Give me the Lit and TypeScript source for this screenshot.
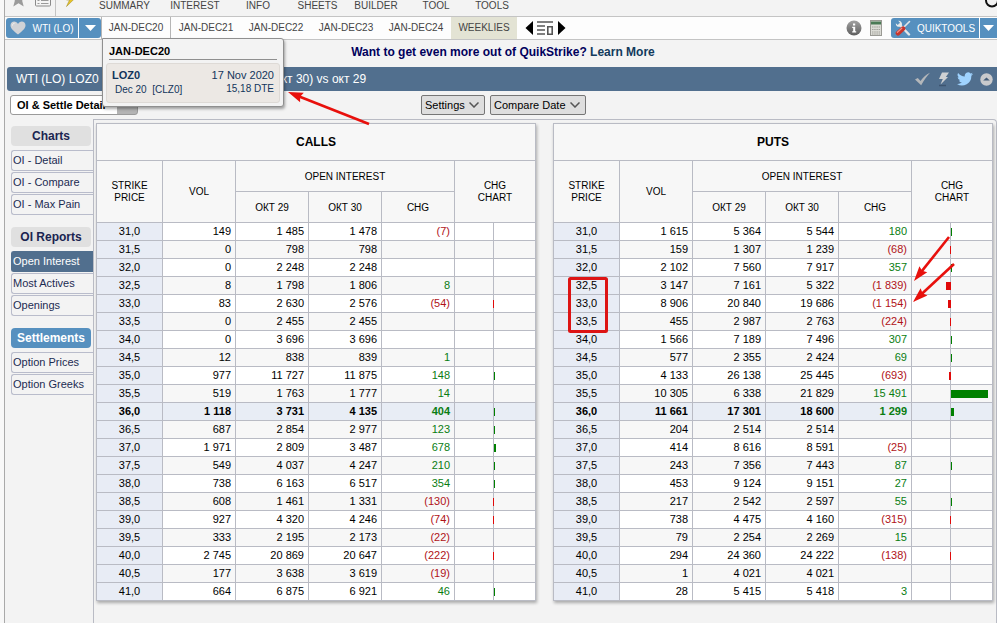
import { LitElement, html, css, svg, nothing } from "lit";
import { customElement, property } from "lit/decorators.js";
import { classMap } from "lit/directives/class-map.js";
import { styleMap } from "lit/directives/style-map.js";

type Row = [strike: string, vol: number, prev: number, last: number, chg: number];

const CALLS: Row[] = [
  ["31,0", 149, 1485, 1478, -7],
  ["31,5", 0, 798, 798, 0],
  ["32,0", 0, 2248, 2248, 0],
  ["32,5", 8, 1798, 1806, 8],
  ["33,0", 83, 2630, 2576, -54],
  ["33,5", 0, 2455, 2455, 0],
  ["34,0", 0, 3696, 3696, 0],
  ["34,5", 12, 838, 839, 1],
  ["35,0", 977, 11727, 11875, 148],
  ["35,5", 519, 1763, 1777, 14],
  ["36,0", 1118, 3731, 4135, 404],
  ["36,5", 687, 2854, 2977, 123],
  ["37,0", 1971, 2809, 3487, 678],
  ["37,5", 549, 4037, 4247, 210],
  ["38,0", 738, 6163, 6517, 354],
  ["38,5", 608, 1461, 1331, -130],
  ["39,0", 927, 4320, 4246, -74],
  ["39,5", 333, 2195, 2173, -22],
  ["40,0", 2745, 20869, 20647, -222],
  ["40,5", 177, 3638, 3619, -19],
  ["41,0", 664, 6875, 6921, 46],
];

const PUTS: Row[] = [
  ["31,0", 1615, 5364, 5544, 180],
  ["31,5", 159, 1307, 1239, -68],
  ["32,0", 2102, 7560, 7917, 357],
  ["32,5", 3147, 7161, 5322, -1839],
  ["33,0", 8906, 20840, 19686, -1154],
  ["33,5", 455, 2987, 2763, -224],
  ["34,0", 1566, 7189, 7496, 307],
  ["34,5", 577, 2355, 2424, 69],
  ["35,0", 4133, 26138, 25445, -693],
  ["35,5", 10305, 6338, 21829, 15491],
  ["36,0", 11661, 17301, 18600, 1299],
  ["36,5", 204, 2514, 2514, 0],
  ["37,0", 414, 8616, 8591, -25],
  ["37,5", 243, 7356, 7443, 87],
  ["38,0", 453, 9124, 9151, 27],
  ["38,5", 217, 2542, 2597, 55],
  ["39,0", 738, 4475, 4160, -315],
  ["39,5", 79, 2254, 2269, 15],
  ["40,0", 294, 24360, 24222, -138],
  ["40,5", 1, 4021, 4021, 0],
  ["41,0", 28, 5415, 5418, 3],
];

const AT_THE_MONEY = "36,0";
const CONTRACTS_PER_PIXEL = 420;
const SMALLEST_DRAWN = 40;

const grouped = (n: number) => String(n).replace(/\B(?=(\d{3})+$)/g, " ");
const signed = (n: number) => (n === 0 ? "" : n < 0 ? `(${grouped(-n)})` : grouped(n));

@customElement("oi-table")
export class OiTable extends LitElement {
  @property() caption = "";
  @property({ attribute: false }) rows: Row[] = [];

  static styles = css`
    :host {
      display: block;
      box-shadow: 1px 2px 3px rgba(0, 0, 0, 0.3);
    }
    table {
      width: 100%;
      table-layout: fixed;
      border-collapse: separate;
      border-spacing: 0;
      border: solid #b9bbc4;
      border-width: 1px 0 0 1px;
      background: #fff;
      color: #000;
      font-size: 11px;
      line-height: 13px;
      white-space: nowrap;
    }
    .strike { width: 66px; }
    .num { width: 73px; }
    .neg { width: 39px; }
    .pos { width: 42px; }
    th,
    td {
      box-sizing: border-box;
      padding: 0 4px;
      border: solid #b9bbc4;
      border-width: 0 1px 1px 0;
      font-weight: 400;
    }
    thead th {
      height: 31px;
      padding-top: 2px;
      background: #f7f7f7;
      font-size: 10px;
      line-height: 12px;
      white-space: normal;
    }
    thead .caption {
      height: 37px;
      padding-top: 0;
      font-size: 12px;
      font-weight: 700;
    }
    thead .tall { padding-top: 0; }
    tbody th {
      background: #e8ecf5;
      text-align: center;
    }
    td { height: 18px; text-align: right; }
    tbody tr:nth-child(even) td { background: #f7f7f7; }
    tbody .atm th,
    tbody .atm td { background: #e8edf5; font-weight: 700; }
    tbody .half { padding: 0; }
    .up { color: #0a7d12; }
    .down { color: #b01218; }
    .bar { position: relative; height: 8px; }
    .bar.rise { background: #008000; }
    .bar.fall { margin: 0 -1px 0 auto; background: #e00a0a; }
  `;

  private bar(chg: number) {
    if (Math.abs(chg) < SMALLEST_DRAWN) return nothing;
    const length = Math.abs(chg) / CONTRACTS_PER_PIXEL;
    const width = chg > 0 ? Math.max(1, Math.round(length)) : Math.floor(length) + 1;
    return html`<div
      class=${classMap({ bar: true, rise: chg > 0, fall: chg < 0 })}
      style=${styleMap({ width: `${width}px` })}
    ></div>`;
  }

  render() {
    return html`
      <table aria-label=${this.caption}>
        <colgroup>
          <col class="strike" /><col class="num" /><col class="num" /><col class="num" />
          <col class="num" /><col class="neg" /><col class="pos" />
        </colgroup>
        <thead>
          <tr><th class="caption" colspan="7">${this.caption}</th></tr>
          <tr>
            <th class="tall" rowspan="2">STRIKE<br />PRICE</th>
            <th class="tall" rowspan="2">VOL</th>
            <th colspan="3">OPEN INTEREST</th>
            <th class="tall" rowspan="2" colspan="2">CHG<br />CHART</th>
          </tr>
          <tr><th>ОКТ 29</th><th>ОКТ 30</th><th>CHG</th></tr>
        </thead>
        <tbody>
          ${this.rows.map(
            ([strike, vol, prev, last, chg]) => html`
              <tr class=${classMap({ atm: strike === AT_THE_MONEY })}>
                <th scope="row">${strike}</th>
                <td>${grouped(vol)}</td>
                <td>${grouped(prev)}</td>
                <td>${grouped(last)}</td>
                <td class=${chg < 0 ? "down" : "up"}>${signed(chg)}</td>
                <td class="half">${chg < 0 ? this.bar(chg) : nothing}</td>
                <td class="half">${chg > 0 ? this.bar(chg) : nothing}</td>
              </tr>
            `
          )}
        </tbody>
      </table>
    `;
  }
}

const MENU = ["SUMMARY", "INTEREST", "INFO", "SHEETS", "BUILDER", "TOOL", "TOOLS"];
const YEARS = ["JAN-DEC20", "JAN-DEC21", "JAN-DEC22", "JAN-DEC23", "JAN-DEC24"];
const SIDEBAR = [
  { title: "Charts", items: ["OI - Detail", "OI - Compare", "OI - Max Pain"] },
  { title: "OI Reports", items: ["Open Interest", "Most Actives", "Openings"] },
  { title: "Settlements", accent: true, items: ["Option Prices", "Option Greeks"] },
];

const starIcon = html`<svg width="16" height="18" viewBox="0 0 16 18">
  <path d="M7.500 2l2.200 5.400 5.800.4-4.400 3.700 1.600 6-5.200-3.200-5.200 3.200 1.600-6L.5 7.800l4.800-.4z" fill="#9b9b9b" />
</svg>`;
const listIcon = html`<svg width="16" height="18" viewBox="0 0 16 18">
  <rect x=".5" y=".5" width="15" height="16.500" rx="1" fill="#f4f4f4" stroke="#8a8a8a" />
  <path d="M2.500 5.500h2M6 5.500h7.500M2.500 8.500h2M6 8.500h7.500M2.500 11.500h2M6 11.500h7.500M2.500 14.500h2M6 14.500h7.500" stroke="#9a9a9a" />
</svg>`;
const boltIcon = html`<svg width="12" height="18" viewBox="0 0 12 18">
  <path d="M5 0h6L8 8.500h2.800L1.500 17.500 4.500 11H1.500z" fill="#e8c426" stroke="#a8922e" stroke-width=".6" />
</svg>`;
const ringIcon = html`<svg width="14" height="14" viewBox="0 0 14 14">
  <circle cx="9" cy="6.500" r="6" fill="none" stroke="#111" stroke-width="2" />
</svg>`;
const heartIcon = html`<svg width="16" height="14" viewBox="0 0 16 14">
  <path d="M8 13.500C3.500 10 .5 7.500.5 4.300.5 2 2.200.5 4.200.5 5.900.5 7.300 1.500 8 3 8.700 1.500 10.100.5 11.800.5c2 0 3.700 1.500 3.700 3.800 0 3.200-3 5.700-7.500 9.200z" fill="#d0d2d6" />
  <path d="M2.500 4.500C2.500 3 3.500 2.300 4.500 2.300" fill="none" stroke="#f4f4f4" />
</svg>`;
const caretIcon = html`<svg width="11" height="6" viewBox="0 0 11 6"><path d="M0 0h11L5.500 6z" fill="#fff" /></svg>`;
const prevIcon = html`<svg width="8" height="14" viewBox="0 0 8 14"><path d="M8 0v14L.5 7z" fill="#000" /></svg>`;
const nextIcon = html`<svg width="8" height="14" viewBox="0 0 8 14"><path d="M0 0v14l7.500-7z" fill="#000" /></svg>`;
const layoutIcon = html`<svg width="17" height="14" viewBox="0 0 17 14">
  <path d="M0 1h16M0 5h8M0 9h8M0 13h8M10.800 5.800h4.400v7.400h-4.400z" fill="none" stroke="#555" stroke-width="1.600" />
</svg>`;
const infoIcon = html`<svg width="16" height="16" viewBox="0 0 16 16">
  <defs><linearGradient id="g" x2="0" y2="1"><stop stop-color="#a2a2a2" /><stop offset="1" stop-color="#5e5e5e" /></linearGradient></defs>
  <circle cx="8" cy="8" r="7.500" fill="url(#g)" />
  <path d="M7 3.500h2.200v2H7zM6.200 6.800h3v4.400h1v1.200H6.200v-1.200h1V8h-1z" fill="#fff" />
</svg>`;
const calcIcon = html`<svg width="12" height="16" viewBox="0 0 12 16">
  <rect x=".5" y=".5" width="11" height="15" fill="#dcdcd6" stroke="#9a9a94" />
  <path d="M1 1.500h10v3H1z" fill="#4a7a55" />
  <path d="M2 7h8M2 9.500h8M2 12h8M2 14h8" stroke="#a2a29c" stroke-width="1.200" stroke-dasharray="1.500 .7" />
</svg>`;
const toolsIcon = html`<svg width="16" height="16" viewBox="0 0 16 16">
  <path d="M4.500 4.500l9.500 10" stroke="#e4e6e8" stroke-width="2.400" stroke-linecap="round" />
  <path d="M.8 3.200C.6 5.800 2.600 7.200 5.200 6.800L7 5C7.300 2.600 5.600.6 3.200.8L5 2.800 4.500 4.500 2.800 5z" fill="#e9ebec" />
  <path d="M8 8l6.500-6.500" stroke="#e4e6e8" stroke-width="1.600" stroke-linecap="round" />
  <path d="M3 13.200L8 8.600" stroke="#c8352c" stroke-width="4.600" stroke-linecap="round" />
  <path d="M2.400 12.300L6.800 8.200" stroke="#f09088" stroke-width="1.200" stroke-linecap="round" />
</svg>`;
const checkIcon = html`<svg width="17" height="14" viewBox="0 0 17 14">
  <path d="M1 7.500l2.800-1.500L6.500 9C9 5.500 12 2.500 16 .8 12.800 4.500 9.800 8.500 7.200 13.300z" fill="#b4b7ba" />
</svg>`;
const flashIcon = html`<svg width="12" height="15" viewBox="0 0 12 15">
  <path d="M4 .5h7L7.800 5H10L2.500 12.500 4.800 7H1z" fill="#cfd1d3" />
  <path d="M1 13.500h7" stroke="#3d5570" stroke-width="1.500" />
</svg>`;
const birdIcon = html`<svg width="16" height="14" viewBox="0 0 24 20">
  <path d="M24 2.400a9.800 9.800 0 0 1-2.800.8 4.900 4.900 0 0 0 2.100-2.700 9.900 9.900 0 0 1-3.100 1.200 4.900 4.900 0 0 0-8.400 4.500A14 14 0 0 1 1.700 1a4.900 4.900 0 0 0 1.500 6.600 4.900 4.900 0 0 1-2.200-.6v.1a4.900 4.900 0 0 0 3.900 4.800 4.900 4.900 0 0 1-2.200.1 4.900 4.900 0 0 0 4.600 3.400A9.900 9.900 0 0 1 0 17.500 14 14 0 0 0 21.500 5.100 10 10 0 0 0 24 2.400z" fill="#9fd3ff" />
</svg>`;
const collapseIcon = html`<svg width="13" height="13" viewBox="0 0 13 13">
  <circle cx="6.500" cy="6.500" r="6.200" fill="#c9cacc" />
  <path d="M3.200 7.600l3.300-3 3.300 3z" fill="#445c78" />
</svg>`;
const chevronIcon = html`<svg class="chevron" width="10" height="6" viewBox="0 0 10 6">
  <path d="M.5.500L5 5 9.500.5" fill="none" stroke="#555" stroke-width="1.500" />
</svg>`;

const arrow = (x1: number, y1: number, x2: number, y2: number) => {
  const angle = (Math.atan2(y2 - y1, x2 - x1) * 180) / Math.PI;
  const length = Math.hypot(x2 - x1, y2 - y1);
  return svg`<g transform=${`translate(${x2} ${y2}) rotate(${angle})`} fill="#e8100c" stroke="#e8100c">
    <path d=${`M${-length} 0H-10`} stroke-width="2.600" />
    <path d="M0 0L-15 -5L-13 0L-15 5z" stroke="none" />
  </g>`;
};

@customElement("app-root")
export class AppRoot extends LitElement {
  static styles = css`
    :host {
      display: block;
      position: relative;
      box-sizing: border-box;
      min-height: 100vh;
      padding-left: 4px;
      overflow: hidden;
      background: #f8f8f8;
      font-family: "Liberation Sans", Arial, sans-serif;
      font-size: 11px;
      line-height: 13px;
      color: #1c2b52;
    }
    a { color: inherit; text-decoration: none; }
    svg { display: block; flex: none; }
    button, select {
      margin: 0;
      padding: 0;
      border: 0;
      background: none;
      font: inherit;
      color: inherit;
    }
    .page {
      display: flex;
      flex-direction: column;
      min-height: 100vh;
      border-left: 1px solid #a9a9a9;
      background: #f3f3f3;
    }
    .menu {
      display: flex;
      height: 16px;
      border-bottom: 1px solid #c4c4c4;
      color: #444;
      font-size: 10px;
      line-height: 12px;
    }
    .quick {
      display: flex;
      align-items: flex-end;
      gap: 8px;
      width: 44px;
      height: 7px;
      padding: 0 0 0 6px;
    }
    .bolt {
      display: flex;
      align-items: flex-end;
      width: 24px;
      height: 7px;
      padding-left: 9px;
    }
    .rule { width: 1px; background: #c4c4c4; }
    .links {
      display: grid;
      grid-template-columns: 71px 70px 56px 63px 54px 66px 46px;
      text-align: center;
    }
    .ring { display: flex; align-items: flex-end; height: 8px; margin-left: auto; }
    .bar {
      display: flex;
      height: 22px;
      border-bottom: 1px solid #c4c4c4;
      background: #fdfdfd;
      color: #444;
      font-size: 10px;
    }
    .split {
      display: flex;
      gap: 1px;
      align-self: center;
      height: 20px;
      margin-left: 1px;
      color: #fff;
    }
    .blue {
      display: flex;
      align-items: center;
      justify-content: center;
      gap: 6px;
      background: #5690bf;
    }
    .symbol { width: 72px; border-radius: 3px 0 0 3px; }
    .drop { width: 22px; border-radius: 0 3px 3px 0; }
    .tools { width: 88px; border-radius: 3px 0 0 3px; }
    .more { width: 17px; }
    .years { display: flex; }
    .years a {
      box-sizing: border-box;
      width: 70px;
      line-height: 22px;
      text-align: center;
    }
    .years .open { border: solid #b5b5b5; border-width: 0 1px; }
    .years .weeklies { width: 66px; background: #e3e3d4; }
    .steps { display: flex; align-items: center; gap: 4px; margin-left: 8px; }
    .utilities { display: flex; align-items: center; gap: 8px; margin-left: auto; }
    .promo {
      height: 27px;
      padding-left: 4px;
      color: #00005c;
      font-size: 12px;
      font-weight: 700;
      line-height: 24px;
      text-align: center;
    }
    .promo a { color: #123a5c; }
    .title {
      display: flex;
      align-items: center;
      gap: 7px;
      height: 24px;
      margin-left: 2px;
      padding: 0 4px 0 9px;
      border-radius: 3px 0 0 3px;
      background: #516f8e;
      color: #fff;
    }
    h1 {
      display: grid;
      grid-template-columns: 255px auto;
      margin: 0 auto 0 0;
      font-size: 12px;
      font-weight: 400;
      line-height: 22px;
      white-space: nowrap;
    }
    .controls {
      display: grid;
      grid-template-columns: 128px 1fr 122px;
      align-items: center;
      height: 28px;
      padding: 0 6px 0 5px;
      color: #000;
    }
    .centred { display: flex; justify-content: center; gap: 5px; }
    .pick { position: relative; display: flex; height: 20px; }
    .pick select {
      appearance: none;
      box-sizing: border-box;
      height: 20px;
      padding: 0 19px 0 3px;
      border: 1px solid #767676;
      border-radius: 2px;
      background: #dedede;
    }
    .pick .chevron {
      position: absolute;
      right: 6px;
      top: 7px;
      pointer-events: none;
    }
    .view select {
      width: 128px;
      padding: 0 20px 0 6px;
      border-color: #9a9a9a;
      border-radius: 3px;
      background: linear-gradient(90deg, #fff 106px, #b4b4b4 106px);
      font-weight: 700;
    }
    .body { display: flex; flex: 1; }
    .sidebar { flex: none; width: 88px; padding: 7px 0 0 6px; box-sizing: border-box; }
    .sidebar h2 {
      margin: 0 2px 4px 0;
      border-radius: 4px;
      background: #e0e0e0;
      color: #1a2450;
      font-size: 12px;
      line-height: 20px;
      text-align: center;
    }
    .sidebar .accent { background: #5690bf; color: #fff; }
    .sidebar ul {
      display: grid;
      gap: 1px;
      margin: 0 0 12px;
      padding: 0;
      list-style: none;
    }
    .sidebar li a {
      display: block;
      padding-left: 1px;
      border: 1px solid #b9bccb;
      border-right: 0;
      border-radius: 3px 0 0 3px;
      line-height: 19px;
    }
    .sidebar .current { border-color: #516f8e; background: #516f8e; color: #fff; }
    .panel {
      display: grid;
      grid-template-columns: 1fr 1fr;
      gap: 17px;
      flex: 1;
      align-items: start;
      padding: 3px 3px 22px 2px;
      border: solid #b9bbc4;
      border-width: 1px 1px 0;
      border-radius: 0 4px 0 0;
    }
    .tip {
      position: absolute;
      left: 102px;
      top: 38px;
      box-sizing: border-box;
      width: 182px;
      padding: 6px 3px 3px;
      border: 1px solid #8f8f8f;
      border-radius: 0 3px 3px 3px;
      background: #f3f3f3;
      box-shadow: 1px 2px 3px rgba(0, 0, 0, 0.35);
    }
    .tip h3 {
      margin: 0 3px 3px;
      padding-bottom: 1px;
      border-bottom: 1px solid #8f8f8f;
      color: #000;
      font-size: 11px;
      line-height: 13px;
    }
    .expiry {
      display: flex;
      justify-content: space-between;
      padding: 5px;
      border: 1px solid #dedad6;
      border-radius: 3px;
      background: #ece8e4;
      color: #12355b;
      line-height: 13px;
    }
    .expiry small { display: block; font-size: 10px; }
    .code small { padding: 1px 0 0 3px; line-height: 14px; white-space: pre; }
    .when { text-align: right; }
    .marks {
      position: absolute;
      left: 0;
      top: 0;
      pointer-events: none;
    }
  `;

  render() {
    return html`
      <div class="page">
        <nav class="menu">
          <div class="quick">${starIcon}${listIcon}</div>
          <div class="rule"></div>
          <div class="bolt">${boltIcon}</div>
          <div class="links">${MENU.map((m) => html`<a href="#">${m}</a>`)}</div>
          <div class="ring">${ringIcon}</div>
        </nav>
        <div class="bar">
          <div class="split">
            <button class="blue symbol">${heartIcon}WTI (LO)</button>
            <button class="blue drop" aria-label="Choose product">${caretIcon}</button>
          </div>
          <nav class="years">
            ${YEARS.map((y, i) => html`<a class=${classMap({ open: i === 0 })} href="#">${y}</a>`)}
            <a class="weeklies" href="#">WEEKLIES</a>
          </nav>
          <div class="steps">
            <button aria-label="Previous">${prevIcon}</button>
            <button aria-label="Layout">${layoutIcon}</button>
            <button aria-label="Next">${nextIcon}</button>
          </div>
          <div class="utilities">
            <button aria-label="Information">${infoIcon}</button>
            <button aria-label="Calculator">${calcIcon}</button>
            <div class="split">
              <button class="blue tools">${toolsIcon}QUIKTOOLS</button>
              <button class="blue more" aria-label="More tools">${caretIcon}</button>
            </div>
          </div>
        </div>
        <div class="promo">Want to get even more out of QuikStrike? <a href="#">Learn More</a></div>
        <header class="title">
          <h1><span>WTI (LO) LOZ0</span><span>(окт 30) vs окт 29</span></h1>
          ${checkIcon}${flashIcon}${birdIcon}${collapseIcon}
        </header>
        <div class="controls">
          <div class="pick view">
            <select aria-label="View"><option>OI &amp; Settle Detail</option></select>
          </div>
          <div class="centred">
            <div class="pick">
              <select aria-label="Settings"><option>Settings</option></select>${chevronIcon}
            </div>
            <div class="pick">
              <select aria-label="Compare Date"><option>Compare Date</option></select>${chevronIcon}
            </div>
          </div>
        </div>
        <div class="body">
          <nav class="sidebar">
            ${SIDEBAR.map(
              (group) => html`
                <h2 class=${classMap({ accent: !!group.accent })}>${group.title}</h2>
                <ul>
                  ${group.items.map(
                    (item) => html`<li>
                      <a class=${classMap({ current: item === "Open Interest" })} href="#">${item}</a>
                    </li>`
                  )}
                </ul>
              `
            )}
          </nav>
          <main class="panel">
            <oi-table caption="CALLS" .rows=${CALLS}></oi-table>
            <oi-table caption="PUTS" .rows=${PUTS}></oi-table>
          </main>
        </div>
      </div>
      <aside class="tip">
        <h3>JAN-DEC20</h3>
        <div class="expiry">
          <div class="code"><b>LOZ0</b><small>Dec 20  [CLZ0]</small></div>
          <div class="when">17 Nov 2020<small>15,18 DTE</small></div>
        </div>
      </aside>
      <svg class="marks" width="997" height="623" viewBox="0 0 997 623">
        ${arrow(369, 124, 288, 92)} ${arrow(949, 237, 914, 281)} ${arrow(954, 264, 913, 302)}
        <rect x="569.500" y="278.500" width="37" height="53" rx="1" fill="none" stroke="#dd1414" stroke-width="3" />
      </svg>
    `;
  }
}
